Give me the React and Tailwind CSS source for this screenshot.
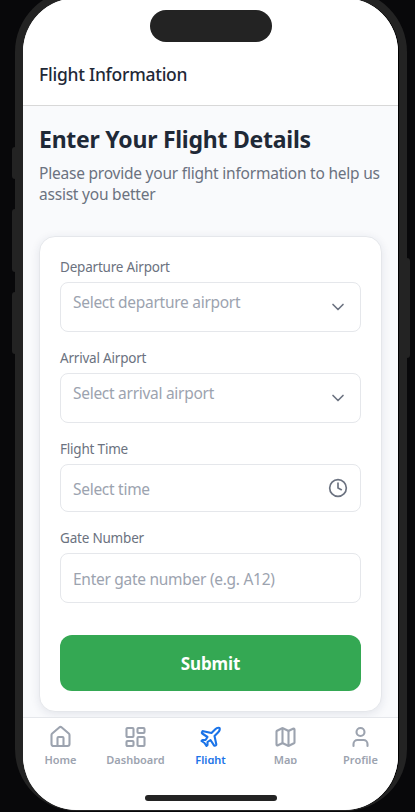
import { House, LayoutDashboard, Plane, Map, User, Clock, ChevronDown } from "lucide-react";

const tabs = [
  { label: "Home", Icon: House },
  { label: "Dashboard", Icon: LayoutDashboard },
  { label: "Flight", Icon: Plane, active: true },
  { label: "Map", Icon: Map },
  { label: "Profile", Icon: User },
];

function Label({ children }) {
  return (
    <div className="h-5 text-[13.5px] leading-[21px] tracking-[-0.2px] text-[#6b7280] whitespace-nowrap">{children}</div>
  );
}

function Placeholder({ className, children }) {
  return (
    <span className={`text-[15.5px] leading-6 tracking-[-0.28px] text-[#9ca3af] whitespace-nowrap ${className}`}>
      {children}
    </span>
  );
}

function Select({ label, placeholder }) {
  return (
    <div className="mb-4 flex flex-col gap-[5px]">
      <Label>{label}</Label>
      <div className="flex h-[50px] items-start justify-between rounded-lg border border-[#e5e7eb] px-3">
        <Placeholder className="pt-[7px]">{placeholder}</Placeholder>
        <ChevronDown size={20} className="mt-[14px] text-[#6b7280]" />
      </div>
    </div>
  );
}

export default function App() {
  return (
    <div className="relative h-[812px] w-[415px] overflow-hidden bg-[#08080a] font-['Noto_Sans','Open_Sans',sans-serif]">
      <div className="absolute left-[12px] top-[147px] h-[32px] w-[8px] rounded-[3px] bg-[#232323]" />
      <div className="absolute left-[12px] top-[209px] h-[63px] w-[8px] rounded-[3px] bg-[#232323]" />
      <div className="absolute left-[12px] top-[292px] h-[62px] w-[8px] rounded-[3px] bg-[#232323]" />
      <div className="absolute left-[402px] top-[258px] h-[100px] w-[8px] rounded-[3px] bg-[#232323]" />

      <div className="relative -mt-[10px] ml-[15px] h-[821px] w-[392px] rounded-[62px] bg-[#232323] pl-[8px] pt-[8px]">
        <div className="h-[812px] w-[376px] rounded-[54px] bg-black pr-px">
          <div className="relative flex h-[812px] w-[375px] flex-col overflow-hidden rounded-[54px] bg-[#f9fafc]">
            <header className="flex h-[108px] shrink-0 items-end border-b border-[#d8d8d8] bg-white px-4 pb-[19px]">
              <h1 className="text-[17.5px] font-medium leading-6 tracking-[-0.26px] text-[#1f2937] whitespace-nowrap">
                Flight Information
              </h1>
            </header>

            <main className="h-[611px] shrink-0 overflow-hidden px-4 pt-[17px]">
              <h2 className="h-8 text-[23px] font-bold leading-8 tracking-[-0.25px] text-[#1f2937] whitespace-nowrap">
                Enter Your Flight Details
              </h2>
              <p className="mt-[8px] text-[15.5px] leading-[21px] tracking-[-0.22px] text-[#6b7280] whitespace-nowrap">
                Please provide your flight information to help us
                <br />
                assist you better
              </p>

              <section className="mt-[31px] h-[476px] rounded-2xl border border-[#e5e7eb] bg-white px-5 pt-5 shadow-[0_2px_10px_rgba(31,41,75,0.1)]">
                <Select label="Departure Airport" placeholder="Select departure airport" />
                <Select label="Arrival Airport" placeholder="Select arrival airport" />
                <div className="mb-4 flex flex-col gap-[5px]">
                  <Label>Flight Time</Label>
                  <div className="flex h-12 items-center justify-between rounded-lg border border-[#e5e7eb] px-3">
                    <Placeholder className="pt-[2px]">Select time</Placeholder>
                    <Clock size={20} className="text-[#6b7280]" />
                  </div>
                </div>
                <div className="flex flex-col gap-[5px]">
                  <Label>Gate Number</Label>
                  <div className="flex h-[50px] items-center rounded-lg border border-[#e5e7eb] px-3">
                    <Placeholder className="pt-px">Enter gate number (e.g. A12)</Placeholder>
                  </div>
                </div>
                <button className="mt-8 block h-14 w-full rounded-xl bg-[#34a853] pt-[2px] text-[17px] font-bold tracking-[-0.1px] text-white">
                  Submit
                </button>
              </section>
            </main>

            <nav className="grid flex-1 grid-cols-5 border-t border-[#e5e7eb] bg-white pt-[7px]">
              {tabs.map(({ label, Icon, active }) => (
                <div key={label} className={`flex flex-col items-center ${active ? "text-[#1a73e8]" : "text-[#9ca3af]"}`}>
                  <Icon size={24} strokeWidth={2.1} className="-translate-x-[0.5px]" />
                  <div className="mt-[2px] h-[13px] overflow-hidden text-[11px] font-semibold leading-[17px]">{label}</div>
                </div>
              ))}
            </nav>

            <div className="absolute left-[127px] top-[12px] h-8 w-[122px] rounded-full bg-[#232323]" />
            <div className="absolute left-[122px] top-[797px] h-[6px] w-[132px] rounded-full bg-[#232323]" />
          </div>
        </div>
      </div>
    </div>
  );
}
